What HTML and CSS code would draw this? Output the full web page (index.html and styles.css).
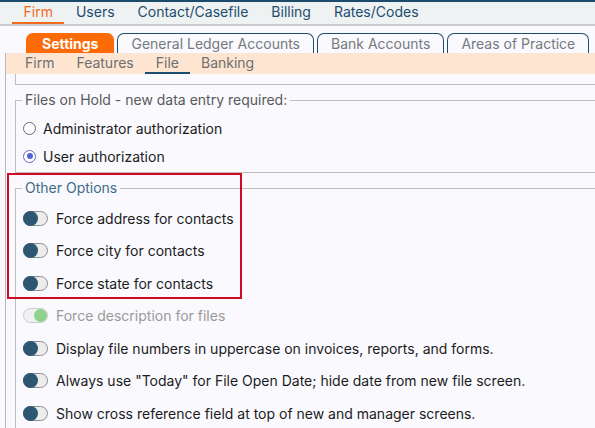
FILE: index.html
```html
<!DOCTYPE html>
<html>
<head>
<meta charset="utf-8">
<link rel="stylesheet" href="styles.css">
</head>
<body>
<div class="topbar">
  <span class="nav-item active">Firm</span>
  <span class="nav-item">Users</span>
  <span class="nav-item">Contact/Casefile</span>
  <span class="nav-item">Billing</span>
  <span class="nav-item">Rates/Codes</span>
</div>
<div class="page">
  <div class="tabs">
    <span class="tab active">Settings</span>
    <span class="tab">General Ledger Accounts</span>
    <span class="tab">Bank Accounts</span>
    <span class="tab">Areas of Practice</span>
  </div>
  <div class="panel">
    <div class="subtabs">
      <span class="subtab">Firm</span>
      <span class="subtab">Features</span>
      <span class="subtab active">File</span>
      <span class="subtab">Banking</span>
    </div>
    <div class="panel-body">
      <div class="prev-group"></div>
      <fieldset class="group">
        <legend class="legend">Files on Hold - new data entry required:</legend>
        <div class="group-body radios">
          <label class="row radio-row"><span class="radio"></span>Administrator authorization</label>
          <label class="row radio-row"><span class="radio checked"></span>User authorization</label>
        </div>
      </fieldset>
      <fieldset class="group">
        <legend class="legend blue">Other Options</legend>
        <div class="group-body toggles">
          <label class="row toggle-row"><span class="toggle"></span>Force address for contacts</label>
          <label class="row toggle-row"><span class="toggle"></span>Force city for contacts</label>
          <label class="row toggle-row"><span class="toggle"></span>Force state for contacts</label>
          <label class="row toggle-row disabled"><span class="toggle on"></span>Force description for files</label>
          <label class="row toggle-row"><span class="toggle"></span>Display file numbers in uppercase on invoices, reports, and forms.</label>
          <label class="row toggle-row"><span class="toggle"></span>Always use "Today" for File Open Date; hide date from new file screen.</label>
          <label class="row toggle-row"><span class="toggle"></span>Show cross reference field at top of new and manager screens.</label>
        </div>
      </fieldset>
    </div>
  </div>
  <div class="highlight"></div>
</div>
</body>
</html>
```
FILE: styles.css
```css
html, body {
  margin: 0;
  padding: 0;
  width: 595px;
  height: 428px;
  overflow: hidden;
  background: #f9f9fe;
  font-family: Inter, "Noto Sans", sans-serif;
  font-size: 14px;
  color: #1c1c1c;
}

.topbar {
  border-top: 2px solid #1b4a6b;
  border-bottom: 2px solid #c8cbcc;
  background: #eef2f3;
  height: 22px;
  display: flex;
  align-items: stretch;
  padding-left: 12px;
}

.nav-item {
  padding: 0 11.5px;
  line-height: 20px;
  height: 20px;
  color: #1d4d6e;
  border-bottom: 2px solid transparent;
}

.nav-item.active {
  color: #f26a1b;
  border-bottom-color: #f26a1b;
}

.page {
  position: relative;
}

.tabs {
  display: flex;
  gap: 3px;
  padding: 7px 0 0 26px;
  height: 20px;
}

.tab {
  height: 19px;
  line-height: 20px;
  padding: 0 13px;
  border: 1px solid #1d4d6e;
  border-bottom: none;
  border-radius: 7px 7px 0 0;
  color: #777a7d;
  background: #f9f9fe;
  white-space: nowrap;
}

.tab.active {
  background: #fd6a08;
  border-color: #fd6a08;
  color: #fff;
  font-weight: 700;
  padding: 0 15px;
}

.panel {
  margin-left: 5px;
  border-left: 1px solid #b8b8b8;
}

.subtabs {
  background: #fde5d2;
  height: 21px;
  display: flex;
  padding-left: 8px;
}

.subtab {
  padding: 0 11px;
  height: 19px;
  line-height: 19px;
  color: #6f6f6f;
  border-bottom: 2px solid transparent;
}

.subtab.active {
  border-bottom-color: #1d4d6e;
}

.panel-body {
  padding-left: 9px;
}

.prev-group {
  height: 10px;
  border: 1px solid #bdbdbd;
  border-top: none;
  margin-right: -20px;
}

.group {
  margin: 7px -20px 0 0;
  padding: 0;
  border: 1px solid #bdbdbd;
  min-width: 0;
}

.legend {
  margin-left: 6px;
  padding: 0 3px;
  line-height: 16px;
  color: #5a5a5a;
}

.legend.blue {
  color: #3f6b86;
}

.group-body {
  padding-left: 7px;
}

.radios {
  padding-top: 6px;
  padding-bottom: 2px;
}

.toggles {
  padding-top: 6px;
}

.row {
  display: flex;
  align-items: center;
  white-space: nowrap;
}

.radio-row {
  height: 28px;
}

.toggle-row {
  height: 32.5px;
}

.radio {
  width: 11px;
  height: 11px;
  border: 1px solid #6a6a6a;
  border-radius: 50%;
  background: #fff;
  margin-right: 7px;
  position: relative;
}

.radio.checked {
  border-color: #5b6bc8;
}

.radio.checked::after {
  content: "";
  position: absolute;
  left: 2.5px;
  top: 2.5px;
  width: 6px;
  height: 6px;
  border-radius: 50%;
  background: #5464cf;
}

.toggle {
  width: 23px;
  height: 13px;
  border: 1px solid #8c8f92;
  border-radius: 8px;
  background: #ececec;
  margin-right: 8px;
  position: relative;
}

.toggle::after {
  content: "";
  position: absolute;
  left: -1px;
  top: -1px;
  width: 15px;
  height: 15px;
  border-radius: 50%;
  background: #2d5672;
}

.toggle.on {
  border-color: #c9cbcc;
  background: #f0f0f0;
}

.toggle.on::after {
  left: auto;
  right: 0;
  top: 0;
  width: 13px;
  height: 13px;
  background: #8fd28d;
}

.disabled {
  color: #9a9a9a;
}

.highlight {
  position: absolute;
  left: 7px;
  top: 147px;
  width: 231px;
  height: 122px;
  border: 2px solid #cf0a24;
}
```
